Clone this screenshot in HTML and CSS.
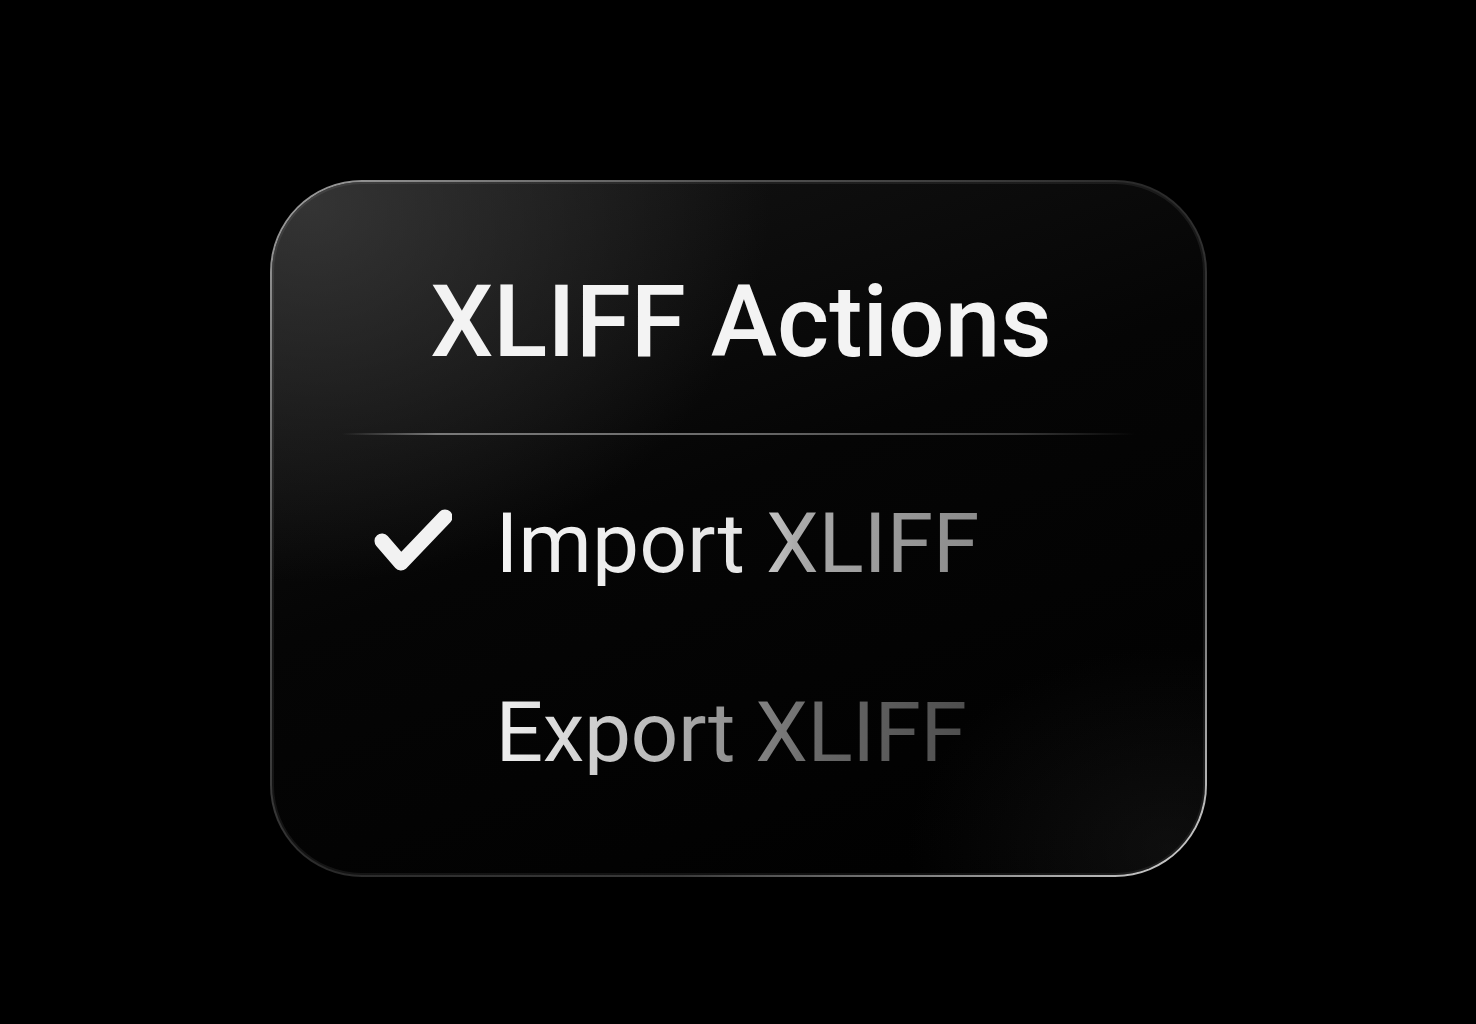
FILE: index.html
```html
<!DOCTYPE html>
<html lang="en">
<head>
    <meta charset="UTF-8">
    <meta name="viewport" content="width=device-width, initial-scale=1.0">
    <title>XLIFF Actions</title>
    <link rel="stylesheet" href="styles.css">
</head>
<body>
    <div class="menu">
        <h1 class="menu-title">XLIFF Actions</h1>
        <div class="divider"></div>

        <div class="menu-item">
            <svg class="check" viewBox="0 0 84 84" width="84" height="84">
                <polyline points="14,39 33,61 77,15" fill="none" stroke="#f2f2f2" stroke-width="15" stroke-linecap="round" stroke-linejoin="round"/>
            </svg>
            <span class="label label-import">Import XLIFF</span>
        </div>

        <div class="menu-item">
            <span class="check"></span>
            <span class="label label-export">Export XLIFF</span>
        </div>
    </div>
</body>
</html>
```

FILE: styles.css
```css
body {
    margin: 0;
    background: #000;
    font-family: Roboto, "Liberation Sans", Arial, sans-serif;
    min-height: 100vh;
    display: flex;
    flex-direction: column;
    align-items: center;
    padding-top: 180px;
    box-sizing: border-box;
}
.menu {
    width: 937px;
    box-sizing: border-box;
    padding: 90px 0 100px;
    border: 2px solid transparent;
    border-radius: 92px;
    background:
        radial-gradient(ellipse 460px 380px at 4% 3%, rgba(60, 60, 60, 0.8), rgba(0, 0, 0, 0) 100%) padding-box,
        radial-gradient(ellipse 260px 200px at 96% 96%, rgba(40, 40, 40, 0.35), rgba(0, 0, 0, 0) 100%) padding-box,
        linear-gradient(160deg, #151515, #050505 45%, #000 100%) padding-box,
        linear-gradient(140deg, #a0a0a0 0%, #555 25%, #2a2a2a 50%, #3a3a3a 70%, #d4d4d4 100%) border-box;
    box-shadow: inset 0 0 0 2px rgba(255, 255, 255, 0.07);
}
.menu-title {
    margin: 0 0 0 6px;
    font-size: 100px;
    font-weight: 500;
    line-height: 1;
    text-align: center;
    color: #f3f3f3;
    letter-spacing: 0;
}
.divider {
    height: 2px;
    margin: 61px 70px 67px;
    background: linear-gradient(90deg, rgba(120, 120, 120, 0) 0%, #7a7a7a 12%, #6a6a6a 50%, #3a3a3a 85%, rgba(60, 60, 60, 0) 100%);
}
.menu-item {
    display: flex;
    align-items: center;
    padding-left: 96px;
    height: 84px;
}
.menu-item + .menu-item {
    margin-top: 105px;
}
.check {
    width: 84px;
    height: 84px;
    flex: none;
    margin-right: 44px;
}
.label {
    font-size: 84px;
    line-height: 1;
    font-weight: 400;
    color: transparent;
    -webkit-background-clip: text;
    background-clip: text;
}
.label-import {
    background-image: linear-gradient(90deg, #f4f4f4 0%, #e6e6e6 50%, #aaa 62%, #8a8a8a 100%);
}
.label-export {
    letter-spacing: -0.5px;
    background-image: linear-gradient(90deg, #f0f0f0 0%, #b8b8b8 35%, #8a8a8a 52%, #666 70%, #4e4e4e 100%);
}
```
